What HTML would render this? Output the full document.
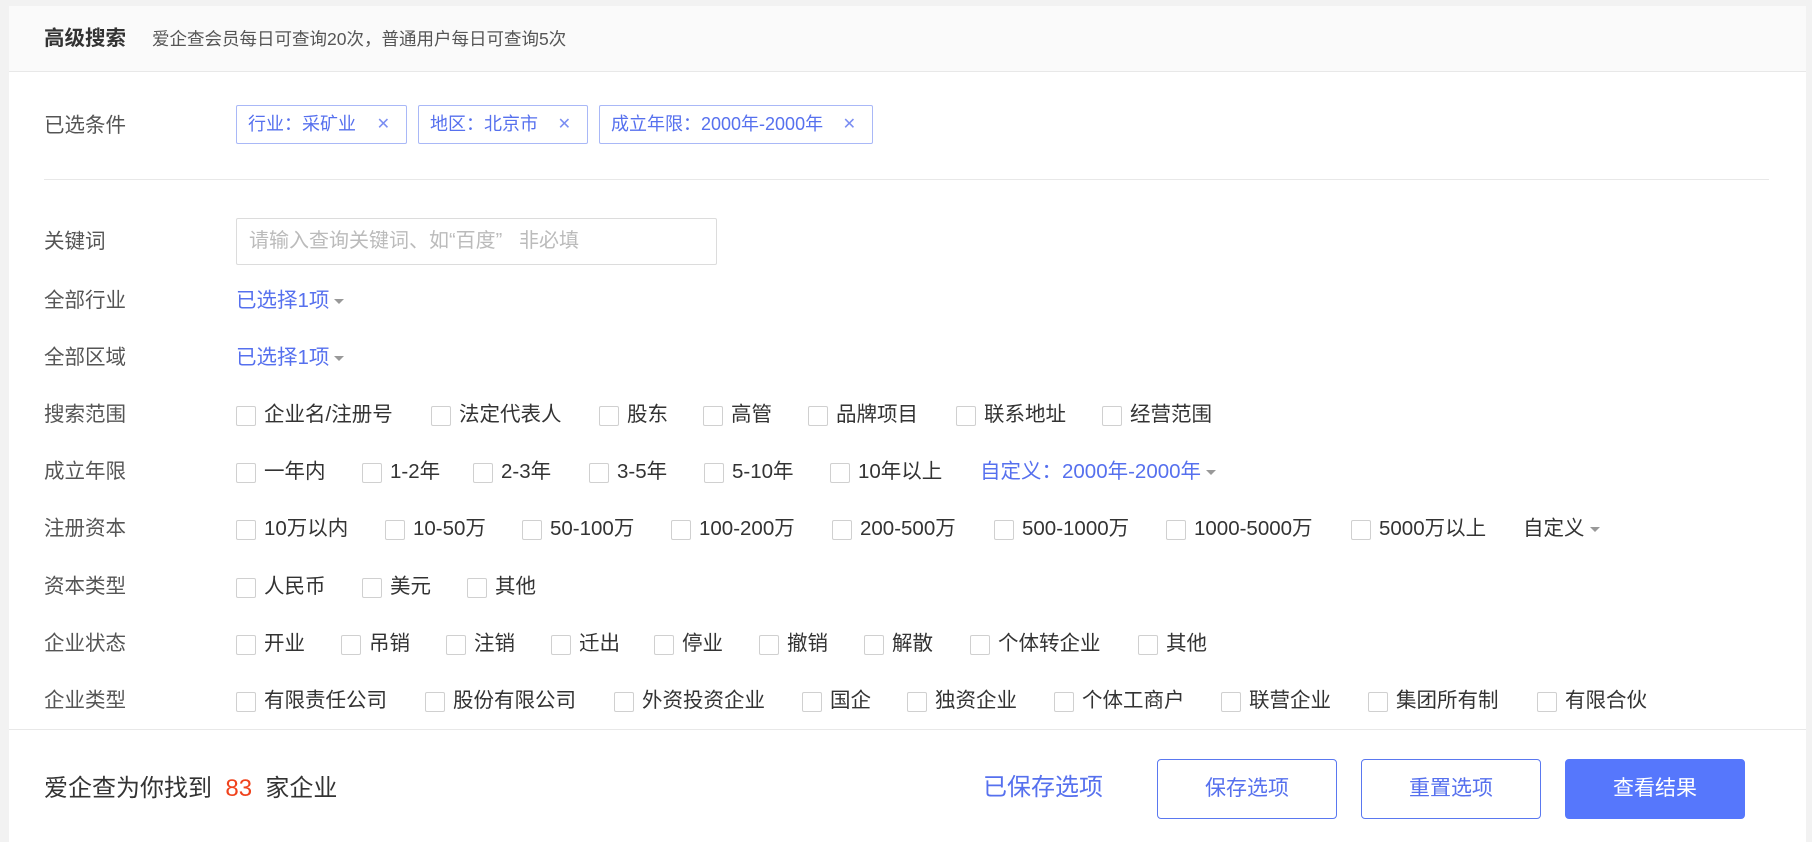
<!DOCTYPE html>
<html><head><meta charset="utf-8">
<style>
*{margin:0;padding:0;box-sizing:border-box}
body{width:1812px;height:842px;background:#f2f2f2;font-family:"Liberation Sans","Noto Sans CJK SC",sans-serif;color:#333;overflow:hidden;position:relative}
.panel{position:absolute;left:9px;top:6px;width:1797px;height:836px;background:#fff}
.hd{position:absolute;left:0;top:0;width:100%;height:66px;background:#fafafa;border-bottom:1px solid #e8e8e8}
.a{position:absolute;white-space:nowrap}
.lbl{font-size:20.5px;color:#555;line-height:24px}
.tag{position:absolute;top:99px;height:39px;border:1px solid #a9b8f7;border-radius:2px;color:#5670ee;font-size:18px;line-height:37px;padding-left:11px}
.tag span{position:absolute;right:16px;color:#7b8ef2;font-size:16px}
.cb{position:absolute;font-size:20.5px;line-height:24px;color:#333;padding-left:28px;white-space:nowrap}
.cb:before{content:"";position:absolute;left:0;top:3px;width:18px;height:18px;border:1px solid #d0d0d0;border-radius:2px;background:#fff}
.blue{color:#5670ee}
.car{display:inline-block;width:0;height:0;border-left:5px solid transparent;border-right:5px solid transparent;border-top:5px solid #999;vertical-align:middle;margin-left:5px}
.btn{position:absolute;top:753px;height:60px;width:180px;border:1px solid #5a78f0;border-radius:4px;color:#5670ee;font-size:21px;line-height:58px;text-align:center}
</style></head><body>
<div class="panel">
<div class="hd"></div>
<div class="a" style="left:35px;top:19px;font-size:20.5px;font-weight:bold;color:#333;line-height:28px">高级搜索</div>
<div class="a" style="left:143px;top:21px;font-size:17.5px;color:#555;line-height:24px">爱企查会员每日可查询20次，普通用户每日可查询5次</div>

<div class="a lbl" style="left:35px;top:108px">已选条件</div>
<div class="tag" style="left:227px;width:171px">行业：采矿业<span>✕</span></div>
<div class="tag" style="left:409px;width:170px">地区：北京市<span>✕</span></div>
<div class="tag" style="left:590px;width:274px">成立年限：2000年-2000年<span>✕</span></div>
<div class="a" style="left:35px;top:173px;width:1725px;height:1px;background:#e8e8e8"></div>

<div class="a lbl" style="left:35px;top:224px">关键词</div>
<div class="a" style="left:227px;top:212px;width:481px;height:47px;border:1px solid #dcdcdc;border-radius:2px;font-size:20px;color:#bbb;line-height:45px;padding-left:12px">请输入查询关键词、如“百度”&nbsp;&nbsp;&nbsp;非必填</div>

<div class="a lbl" style="left:35px;top:283px">全部行业</div>
<div class="a lbl blue" style="left:227px;top:283px">已选择1项<i class="car"></i></div>
<div class="a lbl" style="left:35px;top:340px">全部区域</div>
<div class="a lbl blue" style="left:227px;top:340px">已选择1项<i class="car"></i></div>

<div class="a lbl" style="left:35px;top:397px">搜索范围</div>
<div class="cb" style="left:227px;top:397px">企业名/注册号</div>
<div class="cb" style="left:422px;top:397px">法定代表人</div>
<div class="cb" style="left:590px;top:397px">股东</div>
<div class="cb" style="left:694px;top:397px">高管</div>
<div class="cb" style="left:799px;top:397px">品牌项目</div>
<div class="cb" style="left:947px;top:397px">联系地址</div>
<div class="cb" style="left:1093px;top:397px">经营范围</div>

<div class="a lbl" style="left:35px;top:454px">成立年限</div>
<div class="cb" style="left:227px;top:454px">一年内</div>
<div class="cb" style="left:353px;top:454px">1-2年</div>
<div class="cb" style="left:464px;top:454px">2-3年</div>
<div class="cb" style="left:580px;top:454px">3-5年</div>
<div class="cb" style="left:695px;top:454px">5-10年</div>
<div class="cb" style="left:821px;top:454px">10年以上</div>
<div class="a lbl blue" style="left:971px;top:454px">自定义：2000年-2000年<i class="car"></i></div>

<div class="a lbl" style="left:35px;top:511px">注册资本</div>
<div class="cb" style="left:227px;top:511px">10万以内</div>
<div class="cb" style="left:376px;top:511px">10-50万</div>
<div class="cb" style="left:513px;top:511px">50-100万</div>
<div class="cb" style="left:662px;top:511px">100-200万</div>
<div class="cb" style="left:823px;top:511px">200-500万</div>
<div class="cb" style="left:985px;top:511px">500-1000万</div>
<div class="cb" style="left:1157px;top:511px">1000-5000万</div>
<div class="cb" style="left:1342px;top:511px">5000万以上</div>
<div class="a lbl" style="left:1514px;top:511px;color:#333">自定义<i class="car"></i></div>

<div class="a lbl" style="left:35px;top:569px">资本类型</div>
<div class="cb" style="left:227px;top:569px">人民币</div>
<div class="cb" style="left:353px;top:569px">美元</div>
<div class="cb" style="left:458px;top:569px">其他</div>

<div class="a lbl" style="left:35px;top:626px">企业状态</div>
<div class="cb" style="left:227px;top:626px">开业</div>
<div class="cb" style="left:332px;top:626px">吊销</div>
<div class="cb" style="left:437px;top:626px">注销</div>
<div class="cb" style="left:542px;top:626px">迁出</div>
<div class="cb" style="left:645px;top:626px">停业</div>
<div class="cb" style="left:750px;top:626px">撤销</div>
<div class="cb" style="left:855px;top:626px">解散</div>
<div class="cb" style="left:961px;top:626px">个体转企业</div>
<div class="cb" style="left:1129px;top:626px">其他</div>

<div class="a lbl" style="left:35px;top:683px">企业类型</div>
<div class="cb" style="left:227px;top:683px">有限责任公司</div>
<div class="cb" style="left:416px;top:683px">股份有限公司</div>
<div class="cb" style="left:605px;top:683px">外资投资企业</div>
<div class="cb" style="left:793px;top:683px">国企</div>
<div class="cb" style="left:898px;top:683px">独资企业</div>
<div class="cb" style="left:1045px;top:683px">个体工商户</div>
<div class="cb" style="left:1212px;top:683px">联营企业</div>
<div class="cb" style="left:1359px;top:683px">集团所有制</div>
<div class="cb" style="left:1528px;top:683px">有限合伙</div>

<div class="a" style="left:0;top:723px;width:100%;height:1px;background:#e8e8e8"></div>
<div class="a" style="left:35px;top:768px;font-size:24px;line-height:30px;color:#333">爱企查为你找到&nbsp;&nbsp;<span style="color:#f0421c">83</span>&nbsp;&nbsp;家企业</div>
<div class="a" style="left:974px;top:767px;font-size:24px;line-height:30px;color:#5670ee">已保存选项</div>
<div class="btn" style="left:1148px">保存选项</div>
<div class="btn" style="left:1352px">重置选项</div>
<div class="btn" style="left:1556px;background:#5677fc;border-color:#5677fc;color:#fff">查看结果</div>
</div>
</body></html>
